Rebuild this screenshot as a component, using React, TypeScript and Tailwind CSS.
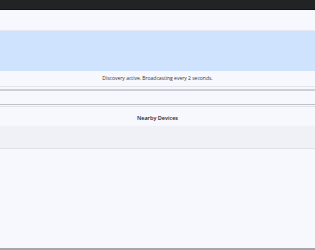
export default function App() {
  return (
    <div className="flex h-[250px] w-[315px] flex-col overflow-hidden bg-[#f7f8fd] font-['Open_Sans',sans-serif]">
      {/* title bar */}
      <div className="h-[10px] shrink-0 border-b border-[#141414] bg-[#222324]" />
      <div className="h-[20px] shrink-0 bg-[#f7f8fd]" />
      {/* status block */}
      <div className="h-[41px] shrink-0 border-t border-[#e3e8f2] bg-[#cfe3ff]" />
      <div className="flex h-[15px] shrink-0 items-center justify-center pt-px text-[5px] text-[#333]">
        Discovery active. Broadcasting every 2 seconds.
      </div>
      <div className="h-px shrink-0 bg-[#e4e5ec]" />
      <div className="h-[2px] shrink-0" />
      <div className="h-[2px] shrink-0 bg-[#cdced6]" />
      <div className="h-[13px] shrink-0" />
      <div className="h-px shrink-0 bg-[#bfc0c8]" />
      <div className="h-px shrink-0" />
      <div className="h-px shrink-0 bg-[#e2e3ea]" />
      {/* nearby devices */}
      <div className="flex h-[19px] shrink-0 items-center justify-center pt-[3px] text-[5.5px] font-semibold text-[#222]">
        Nearby Devices
      </div>
      <div className="h-[23px] shrink-0 border-b border-[#e0e1e8] bg-[#f0f1f6]" />
      <div className="flex-1 bg-[#f7f8fd]" />
      <div className="h-[2px] shrink-0 bg-[#a6a6a6]" />
    </div>
  );
}
